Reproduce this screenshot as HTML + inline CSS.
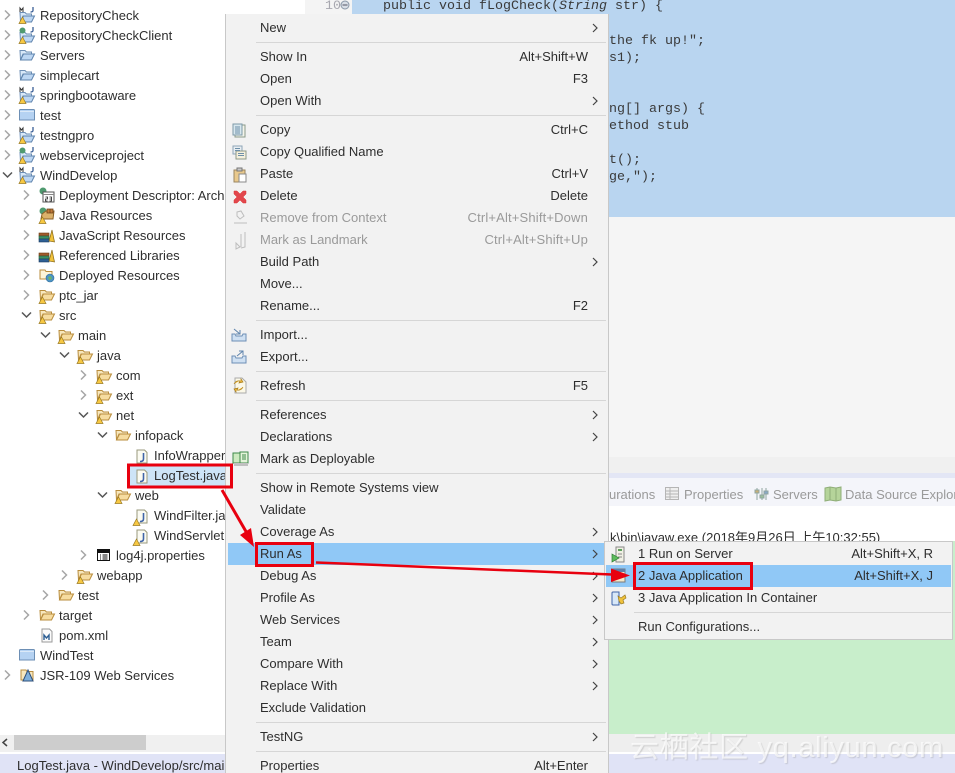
<!DOCTYPE html>
<html><head><meta charset="utf-8">
<style>
html,body{margin:0;padding:0;background:#fff}
#p{position:relative;width:955px;height:773px;overflow:hidden;background:#fff;font:13px "Liberation Sans","Noto Sans CJK SC",sans-serif;color:#2e2e2e}
.b{position:absolute}
.t,.c,.k,.a{position:absolute;white-space:nowrap;line-height:20px;height:20px;transform:translateY(1px)}
.c{font:13.33px/17px "Liberation Mono",monospace;height:17px;color:#3a3a3a}
.k{text-align:right}
.g{color:#9a9a9a}
.s{position:absolute;height:1px;background:#d6d6d6}
svg{position:absolute;left:0;top:0}
</style></head><body><div id="p">

<!-- editor background -->
<div class="b" style="left:305px;top:0;width:650px;height:14px;background:#f4f4f4"></div>
<div class="b" style="left:352px;top:0;width:603px;height:217px;background:#b9d5f0"></div>
<div class="b" style="left:608px;top:217px;width:347px;height:240px;background:#f5f5f5"></div>
<div class="b" style="left:608px;top:457px;width:347px;height:16px;background:#f0f0f0"></div>
<div class="b" style="left:608px;top:473px;width:347px;height:5px;background:#e3e6f5"></div>
<div class="b" style="left:608px;top:478px;width:347px;height:28px;background:#f4f5fa"></div>
<div class="b" style="left:608px;top:541px;width:347px;height:193px;background:#c8eecb"></div>
<div class="b" style="left:608px;top:734px;width:347px;height:19px;background:#eeeeee"></div>
<div class="b" style="left:0;top:752px;width:955px;height:2px;background:#fff"></div>
<div class="b" style="left:0;top:754px;width:955px;height:19px;background:#e0e3f6"></div>

<div class="c" style="left:325px;top:-3px;color:#a8a8b0">10</div>
<div class="c" style="left:383px;top:-3px">public void fLogCheck(<i>String</i> str) {</div>
<div class="c" style="left:609px;top:32px">the fk up!";</div>
<div class="c" style="left:609px;top:49px">s1);</div>
<div class="c" style="left:609px;top:100px">ng[] args) {</div>
<div class="c" style="left:609px;top:117px">ethod stub</div>
<div class="c" style="left:609px;top:151px">t();</div>
<div class="c" style="left:609px;top:168px">ge,");</div>

<div class="t g" style="left:609px;top:484px">urations</div>
<div class="t g" style="left:684px;top:484px">Properties</div>
<div class="t g" style="left:773px;top:484px">Servers</div>
<div class="t g" style="left:845px;top:484px;width:110px;overflow:hidden">Data Source Explorer</div>
<div class="t" style="left:610px;top:527px">k\bin\javaw.exe (2018年9月26日 上午10:32:55)</div>

<!-- tree -->
<div class="b" style="left:0;top:0;width:225px;height:735px;overflow:hidden;background:#fff">
<div class="b" style="left:130px;top:466px;width:95px;height:20px;background:#cde4f7"></div>
<div class="t" style="left:40px;top:5px">RepositoryCheck</div>
<div class="t" style="left:40px;top:25px">RepositoryCheckClient</div>
<div class="t" style="left:40px;top:45px">Servers</div>
<div class="t" style="left:40px;top:65px">simplecart</div>
<div class="t" style="left:40px;top:85px">springbootaware</div>
<div class="t" style="left:40px;top:105px">test</div>
<div class="t" style="left:40px;top:125px">testngpro</div>
<div class="t" style="left:40px;top:145px">webserviceproject</div>
<div class="t" style="left:40px;top:165px">WindDevelop</div>
<div class="t" style="left:59px;top:185px">Deployment Descriptor: Archetype</div>
<div class="t" style="left:59px;top:205px">Java Resources</div>
<div class="t" style="left:59px;top:225px">JavaScript Resources</div>
<div class="t" style="left:59px;top:245px">Referenced Libraries</div>
<div class="t" style="left:59px;top:265px">Deployed Resources</div>
<div class="t" style="left:59px;top:285px">ptc_jar</div>
<div class="t" style="left:59px;top:305px">src</div>
<div class="t" style="left:78px;top:325px">main</div>
<div class="t" style="left:97px;top:345px">java</div>
<div class="t" style="left:116px;top:365px">com</div>
<div class="t" style="left:116px;top:385px">ext</div>
<div class="t" style="left:116px;top:405px">net</div>
<div class="t" style="left:135px;top:425px">infopack</div>
<div class="t" style="left:154px;top:445px">InfoWrapper.java</div>
<div class="t" style="left:154px;top:465px">LogTest.java</div>
<div class="t" style="left:135px;top:485px">web</div>
<div class="t" style="left:154px;top:505px">WindFilter.java</div>
<div class="t" style="left:154px;top:525px">WindServlet.java</div>
<div class="t" style="left:116px;top:545px">log4j.properties</div>
<div class="t" style="left:97px;top:565px">webapp</div>
<div class="t" style="left:78px;top:585px">test</div>
<div class="t" style="left:59px;top:605px">target</div>
<div class="t" style="left:59px;top:625px">pom.xml</div>
<div class="t" style="left:40px;top:645px">WindTest</div>
<div class="t" style="left:40px;top:665px">JSR-109 Web Services</div>
</div>

<!-- tree icons -->
<svg width="225" height="735" viewBox="0 0 225 735">
<defs>
<g id="ofo"><path d="M1 3.500h5l1.500 1.500h5v2H4L1.500 13z" fill="#f7e7bd" stroke="#b98d3e"/><path d="M1.500 13L4.500 7h11l-3 6z" fill="#f6dca0" stroke="#b98d3e"/></g>
<g id="bfo"><path d="M1 3.500h5l1.500 1.500h5v2H4L1.500 13z" fill="#d8e8f8" stroke="#6d8fb5"/><path d="M1.500 13L4.500 7h11l-3 6z" fill="#bcd6f2" stroke="#5f84ad"/></g>
<path id="wr" d="M3.500 9L7 15.500H0z" fill="#f7c843" stroke="#9b7a20" stroke-width=".7"/>
<g id="mj"><use href="#bfo" y="2"/><path d="M1 5V1l1.500 2L4 1v4" fill="none" stroke="#333" stroke-width="1"/><path d="M14 0v3.500q0 1.500-2.500 1.500" fill="none" stroke="#3a5f96" stroke-width="1.300"/><use href="#wr" x="0" y="1"/></g>
<g id="wj"><use href="#bfo" y="2"/><circle cx="3.500" cy="3.500" r="3" fill="#4f9a6f"/><path d="M14 0v3.500q0 1.500-2.500 1.500" fill="none" stroke="#3a5f96" stroke-width="1.300"/><use href="#wr" x="0" y="1"/></g>
<g id="wf"><use href="#ofo"/><use href="#wr" x="0" y="1"/></g>
<g id="jv"><path d="M3 1h7.500L13 3.500V14H3z" fill="#fbfbf2" stroke="#9a9a7d"/><path d="M9.500 4v6q0 2.500-3.500 2.500" fill="none" stroke="#3f64a8" stroke-width="1.600"/></g>
<g id="jw"><use href="#jv"/><use href="#wr" x="-1" y="1"/></g>
<g id="pj"><path d="M1.500 2.500h13q1 0 1 1v9.500H.500V3.500q0-1 1-1z" fill="#b5d2f2" stroke="#6d8fb5"/><path d="M1 4.500h14" stroke="#dbe9f8"/></g>
<path id="cl" d="M-2.500-4.500L2 0l-4.500 4.500" fill="none" stroke="#a6a6a6" stroke-width="1.500"/>
<path id="op" d="M-4.500-2.500L0 2l4.500-4.500" fill="none" stroke="#555" stroke-width="1.500"/>
</defs>
<g transform="translate(19,-14)"><use href="#ofo"/></g>
<use href="#cl" x="7.500" y="15"/><use href="#cl" x="7.500" y="35"/><use href="#cl" x="7.500" y="55"/><use href="#cl" x="7.500" y="75"/><use href="#cl" x="7.500" y="95"/><use href="#cl" x="7.500" y="115"/><use href="#cl" x="7.500" y="135"/><use href="#cl" x="7.500" y="155"/><use href="#op" x="7.500" y="175"/>
<use href="#cl" x="26.500" y="195"/><use href="#cl" x="26.500" y="215"/><use href="#cl" x="26.500" y="235"/><use href="#cl" x="26.500" y="255"/><use href="#cl" x="26.500" y="275"/><use href="#cl" x="26.500" y="295"/><use href="#op" x="26.500" y="315"/>
<use href="#op" x="45.500" y="335"/><use href="#op" x="64.500" y="355"/><use href="#cl" x="83.500" y="375"/><use href="#cl" x="83.500" y="395"/><use href="#op" x="83.500" y="415"/><use href="#op" x="102.500" y="435"/><use href="#op" x="102.500" y="495"/>
<use href="#cl" x="83.500" y="555"/><use href="#cl" x="64.500" y="575"/><use href="#cl" x="45.500" y="595"/><use href="#cl" x="26.500" y="615"/><use href="#cl" x="7.500" y="675"/>

<use href="#mj" x="19" y="7"/><use href="#wj" x="19" y="27"/><use href="#bfo" x="19" y="47"/><use href="#bfo" x="19" y="67"/><use href="#mj" x="19" y="87"/><use href="#pj" x="19" y="107"/><use href="#mj" x="19" y="127"/><use href="#wj" x="19" y="147"/><use href="#mj" x="19" y="167"/>
<!-- deployment descriptor -->
<g transform="translate(39,187)"><circle cx="4" cy="4" r="3.500" fill="#4f9a6f"/><rect x="4" y="5" width="11" height="10" fill="#fff" stroke="#555"/><path d="M4 7.500h11" stroke="#888"/><path d="M6.500 10h2v2h-2v2h2M10.500 10h2v4h-2M10.500 12h2" fill="none" stroke="#222" stroke-width=".8"/></g>
<!-- java resources -->
<g transform="translate(39,207)"><circle cx="4" cy="4" r="3.500" fill="#4f9a6f"/><path d="M3 7l4-3h8l-1 8H2z" fill="#dbb16a" stroke="#8a6128"/><path d="M8 2h6v4H8zM11 2v4" fill="#c27a3a" stroke="#6b4218" stroke-width=".8"/><use href="#wr" x="0" y="1"/></g>
<!-- js/ref libs -->
<g id="lb" transform="translate(39,227)"><rect x="0" y="6" width="10" height="3" fill="#a05a2a" stroke="#6b3c16" stroke-width=".6"/><rect x="0" y="9" width="10" height="3" fill="#3d8f63" stroke="#245a3c" stroke-width=".6"/><rect x="0" y="12" width="10" height="3" fill="#2e5f94" stroke="#1b3c60" stroke-width=".6"/><path d="M10 14l3-11 2.500 12z" fill="#f0c23c" stroke="#8a6a18" stroke-width=".7"/></g>
<use href="#lb" y="20"/>
<g transform="translate(39,267)"><path d="M1 3h5l1 1.500h6V12H1z" fill="#fdf4d8" stroke="#b98d3e"/><circle cx="11" cy="11" r="4" fill="#4d93c5" stroke="#2e6d98" stroke-width=".6"/><path d="M9 10l3-1 1 3-3 1z" fill="#6cb36b"/></g>
<use href="#wf" x="39" y="287"/><use href="#wf" x="39" y="307"/><use href="#wf" x="58" y="327"/><use href="#wf" x="77" y="347"/><use href="#wf" x="96" y="367"/><use href="#wf" x="96" y="387"/><use href="#wf" x="96" y="407"/><use href="#ofo" x="115" y="427"/>
<use href="#jv" x="134" y="449"/><use href="#jv" x="134" y="469"/><use href="#wf" x="115" y="487"/><use href="#jw" x="134" y="509"/><use href="#jw" x="134" y="529"/>
<g transform="translate(97,548)"><rect x=".5" y="1.500" width="12" height="11" fill="#fff" stroke="#111"/><path d="M1 2h11v3H1z" fill="#111"/><path d="M3 7h1M3 9h1M3 11h1M5.500 7h5M5.500 9h5M5.500 11h5" stroke="#111"/></g>
<use href="#wf" x="77" y="567"/><use href="#ofo" x="58" y="587"/><use href="#ofo" x="39" y="607"/>
<g transform="translate(40,628)"><path d="M2 1h7.500L12 3.500V14H2z" fill="#fbfbfb" stroke="#9a9a9a"/><path d="M4 12V7l2.500 3L9 7v5" fill="none" stroke="#2e5f94" stroke-width="1.400"/></g>
<use href="#pj" x="19" y="647"/>
<g transform="translate(20,667)"><path d="M1 3h5l1 1.500h6V13H1z" fill="#f7e7bd" stroke="#b98d3e"/><path d="M8 3l5 11H3z" fill="#7fb0dc" stroke="#2e4f7a"/></g>
</svg>

<!-- scrollbar -->
<div class="b" style="left:0;top:735px;width:225px;height:17px;background:#f0f0f0"></div>
<div class="b" style="left:14px;top:735px;width:132px;height:15px;background:#cdcdcd"></div>
<svg width="14" height="773" viewBox="0 0 14 773"><path d="M7 739l-4 3.500 4 3.500" fill="none" stroke="#444" stroke-width="1.500"/></svg>
<div class="t" style="left:17px;top:755px;width:208px;overflow:hidden">LogTest.java - WindDevelop/src/main/java</div>

<!-- main menu -->
<div class="b" style="left:225px;top:14px;width:382px;height:759px;background:#f2f2f2;border-left:1px solid #c8c8c8;border-right:1px solid #c8c8c8;box-sizing:content-box"></div>
<div class="b" style="left:228px;top:543px;width:378px;height:22px;background:#90c8f6"></div>
<div class="s" style="left:256px;width:350px;top:42px"></div>
<div class="s" style="left:256px;width:350px;top:115px"></div>
<div class="s" style="left:256px;width:350px;top:320px"></div>
<div class="s" style="left:256px;width:350px;top:371px"></div>
<div class="s" style="left:256px;width:350px;top:400px"></div>
<div class="s" style="left:256px;width:350px;top:473px"></div>
<div class="s" style="left:256px;width:350px;top:722px"></div>
<div class="s" style="left:256px;width:350px;top:751px"></div>

<div class="t" style="left:260px;top:17px">New</div>
<div class="t" style="left:260px;top:46px">Show In</div><div class="k" style="right:367px;top:46px">Alt+Shift+W</div>
<div class="t" style="left:260px;top:68px">Open</div><div class="k" style="right:367px;top:68px">F3</div>
<div class="t" style="left:260px;top:90px">Open With</div>
<div class="t" style="left:260px;top:119px">Copy</div><div class="k" style="right:367px;top:119px">Ctrl+C</div>
<div class="t" style="left:260px;top:141px">Copy Qualified Name</div>
<div class="t" style="left:260px;top:163px">Paste</div><div class="k" style="right:367px;top:163px">Ctrl+V</div>
<div class="t" style="left:260px;top:185px">Delete</div><div class="k" style="right:367px;top:185px">Delete</div>
<div class="t g" style="left:260px;top:207px">Remove from Context</div><div class="k g" style="right:367px;top:207px;letter-spacing:.16px">Ctrl+Alt+Shift+Down</div>
<div class="t g" style="left:260px;top:229px">Mark as Landmark</div><div class="k g" style="right:367px;top:229px;letter-spacing:.16px">Ctrl+Alt+Shift+Up</div>
<div class="t" style="left:260px;top:251px">Build Path</div>
<div class="t" style="left:260px;top:273px">Move...</div>
<div class="t" style="left:260px;top:295px">Rename...</div><div class="k" style="right:367px;top:295px">F2</div>
<div class="t" style="left:260px;top:324px">Import...</div>
<div class="t" style="left:260px;top:346px">Export...</div>
<div class="t" style="left:260px;top:375px">Refresh</div><div class="k" style="right:367px;top:375px">F5</div>
<div class="t" style="left:260px;top:404px">References</div>
<div class="t" style="left:260px;top:426px">Declarations</div>
<div class="t" style="left:260px;top:448px">Mark as Deployable</div>
<div class="t" style="left:260px;top:477px">Show in Remote Systems view</div>
<div class="t" style="left:260px;top:499px">Validate</div>
<div class="t" style="left:260px;top:521px">Coverage As</div>
<div class="t" style="left:260px;top:543px">Run As</div>
<div class="t" style="left:260px;top:565px">Debug As</div>
<div class="t" style="left:260px;top:587px">Profile As</div>
<div class="t" style="left:260px;top:609px">Web Services</div>
<div class="t" style="left:260px;top:631px">Team</div>
<div class="t" style="left:260px;top:653px">Compare With</div>
<div class="t" style="left:260px;top:675px">Replace With</div>
<div class="t" style="left:260px;top:697px">Exclude Validation</div>
<div class="t" style="left:260px;top:726px">TestNG</div>
<div class="t" style="left:260px;top:755px">Properties</div><div class="k" style="right:367px;top:755px">Alt+Enter</div>

<!-- submenu -->
<div class="b" style="left:604px;top:541px;width:349px;height:99px;box-sizing:border-box;background:#f2f2f2;border:1px solid #c8c8c8"></div>
<div class="b" style="left:606px;top:565px;width:345px;height:22px;background:#90c8f6"></div>
<div class="s" style="left:634px;width:317px;top:612px"></div>
<div class="t" style="left:638px;top:543px">1 Run on Server</div><div class="k" style="right:22px;top:543px">Alt+Shift+X, R</div>
<div class="t" style="left:638px;top:565px">2 Java Application</div><div class="k" style="right:22px;top:565px">Alt+Shift+X, J</div>
<div class="t" style="left:638px;top:587px">3 Java Application In Container</div>
<div class="t" style="left:638px;top:616px">Run Configurations...</div>

<!-- watermark -->
<div class="t" style="left:630px;top:729px;height:36px;line-height:36px;font-size:29px;letter-spacing:.7px;color:rgba(255,255,255,.7);text-shadow:1px 1px 1px rgba(140,140,140,.3)">云栖社区 yq.aliyun.com</div>

<!-- overlay icons -->
<svg width="955" height="773" viewBox="0 0 955 773">
<g fill="none" stroke="#444" stroke-width="1.200">
<path id="ar" d="M593 24l4 4-4 4"/>
<use href="#ar" y="73"/><use href="#ar" y="234"/><use href="#ar" y="387"/><use href="#ar" y="409"/><use href="#ar" y="504"/><use href="#ar" y="526"/><use href="#ar" y="548"/><use href="#ar" y="570"/><use href="#ar" y="592"/><use href="#ar" y="614"/><use href="#ar" y="636"/><use href="#ar" y="658"/><use href="#ar" y="709"/>
</g>
<!-- menu icons -->
<g transform="translate(232,123)"><rect x="3" y="2" width="10" height="12" fill="#f4f4ea" stroke="#8a9a8a"/><rect x="1" y="1" width="9" height="11" fill="#d7e7ee" stroke="#7d9aa8"/><path d="M3 4h5M3 6h5M3 8h5M3 10h5" stroke="#6d8fa8"/></g>
<g transform="translate(232,145)"><rect x="1" y="1" width="9" height="8" fill="#e8eef2" stroke="#8fa5b8"/><rect x="4" y="6" width="10" height="8" fill="#f5f0dc" stroke="#8f9a8a"/><path d="M3 3.500h5M3 5.500h5M6 8.500h6M6 10.500h6" stroke="#6d8fa8"/></g>
<g transform="translate(233,167)"><rect x="1" y="3" width="11" height="12" fill="#e9c98c" stroke="#9a8560"/><rect x="4" y="1" width="5" height="3" fill="#c8c8c8" stroke="#777"/><rect x="6" y="7" width="7" height="8" fill="#fff" stroke="#8a8a8a"/></g>
<path d="M234 191l3 0 3 3 3-3 3 0v3l-3 3 3 3v3h-3l-3-3-3 3h-3v-3l3-3-3-3z" fill="#e2484d" stroke="#d33" stroke-width=".5"/>
<g fill="none" stroke="#bdbdbd"><path d="M234 223h13M237 212l4-1 3 5-4 3-3-3z"/><path d="M241 234v13M245 232v15l-4 1M236 243l4 4-4 2z"/></g>
<g transform="translate(231,327)" fill="none" stroke="#6d8fb5"><path d="M1 7v7h14V7h-3l-1 2H5L4 7z" fill="#cfe0f2"/><path d="M3 2l6 5M9 3v4H5" stroke="#5f84ad"/></g>
<g transform="translate(231,349)" fill="none" stroke="#6d8fb5"><path d="M1 7v7h14V7h-3l-1 2H5L4 7z" fill="#cfe0f2"/><path d="M6 7l6-5M8 2h4v4" stroke="#5f84ad"/></g>
<g transform="translate(232,377)"><path d="M3 1h7l4 4v11H3z" fill="#fbf8e8" stroke="#aaa"/><path d="M2 7q2-4 6-3l-1 2 4-1-2-3v1M11 10q-2 4-6 3l1-2-4 1 2 3v-1" fill="#e8b33c" stroke="#a87c18" stroke-width=".7"/></g>
<g transform="translate(232,451)"><rect x="1" y="2" width="7" height="10" fill="#cdeac0" stroke="#3e8a4a"/><rect x="8" y="1" width="8" height="11" fill="#e4f4da" stroke="#3e8a4a"/><path d="M10 4h4M10 6h4M10 8h4" stroke="#3e8a4a"/><rect x="2" y="12" width="14" height="3" fill="#c0c0c0"/></g>
<!-- submenu icons -->
<g transform="translate(611,546)"><rect x="5" y="1" width="8" height="15" fill="#f0f0e4" stroke="#888"/><rect x="7" y="3" width="4" height="2" fill="#5ea05e"/><path d="M7 8h4M7 11h4" stroke="#888"/><path d="M1 8l7 4-7 4z" fill="#5dbb5d" stroke="#2e7d32" stroke-width=".7"/></g>
<g transform="translate(611,568)"><rect x="1" y="1" width="13" height="13" fill="#f5e8c8" stroke="#7a7a7a"/><path d="M1 1h13v3H1z" fill="#5f7fa8"/></g>
<g transform="translate(611,591)"><path d="M2 1h6v13H2q-1 0-1-1V2q0-1 1-1z" fill="#d8e8f8" stroke="#3f64a8"/><path d="M7 5l3 2 4-3 1 3-3 2 1 3-3 1-2-3z" fill="#f0c23c" stroke="#9a7a20" stroke-width=".7"/></g>
<!-- tab icons -->
<g transform="translate(665,487)" fill="none" stroke="#b5b5b5"><rect x=".5" y=".5" width="13" height="12" fill="#efefef"/><path d="M1 4h12M1 7h12M1 10h12M5 1v11"/></g>
<g transform="translate(755,487)" fill="none" stroke="#8fa5a0"><path d="M2 1v12M7 1v12M11 1v12"/><rect x="0" y="3" width="4" height="3" fill="#c8b078"/><rect x="5" y="8" width="4" height="3" fill="#9cc09a"/><rect x="9" y="4" width="4" height="3" fill="#8aa8c8"/></g>
<g transform="translate(825,486)"><path d="M0 2l5-1 6 1 5-1v13l-5 1-6-1-5 1z" fill="#b5d49a" stroke="#8fae78"/><path d="M5 1v13M11 2v13" stroke="#8fae78"/></g>
<!-- editor fold -->
<circle cx="345" cy="5" r="4" fill="#d8dee6" stroke="#8a98a8"/><path d="M342.500 5h5" stroke="#556"/>
<!-- red annotations -->
<g fill="none" stroke="#e8000f" stroke-width="3">
<rect x="128.500" y="465" width="103" height="22"/>
<rect x="256.500" y="543.500" width="56" height="22"/>
<rect x="634.500" y="563.500" width="117" height="25"/>
</g>
<path d="M222 490L248 535" stroke="#e8000f" stroke-width="3" fill="none"/>
<path d="M254 547L240 535 251 528z" fill="#e8000f"/>
<path d="M316 562.500L612 574.500" stroke="#e8000f" stroke-width="2.500" fill="none"/>
<path d="M630 575.500L611 582 611 568.500z" fill="#e8000f"/>
</svg>
</div></body></html>
